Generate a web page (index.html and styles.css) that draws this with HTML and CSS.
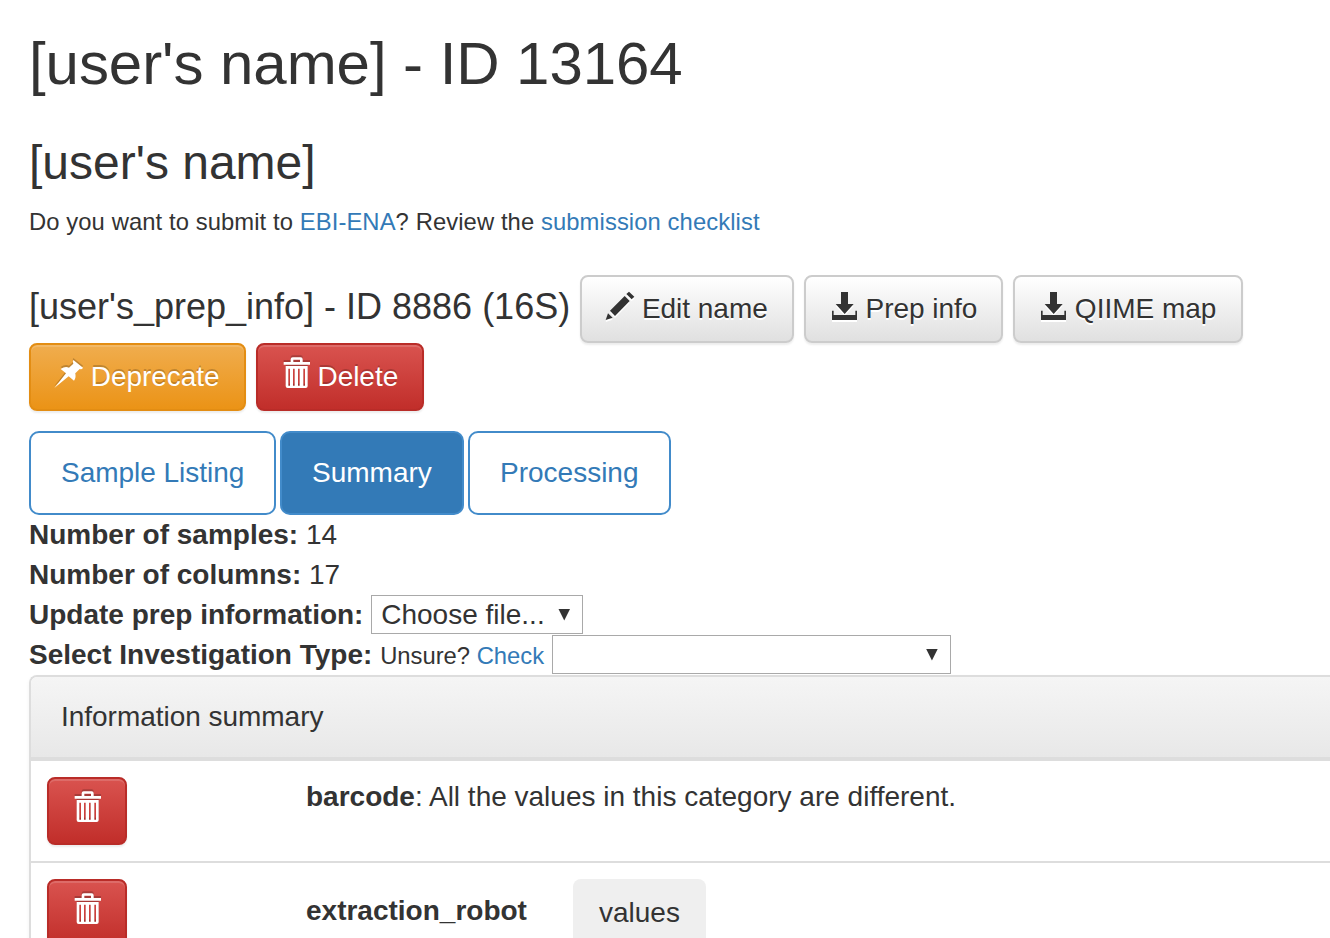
FILE: index.html
```html
<!DOCTYPE html>
<html lang="en">
<head>
<meta charset="utf-8">
<title>Prep information</title>
<link rel="stylesheet" href="styles.css">
</head>
<body>
<svg class="defs" aria-hidden="true">
  <symbol id="pencil" viewBox="108 81 84 84" overflow="visible"><path d="M107 165L114 145L128 158ZM120 137L164 93L179 108L135 153ZM169 87L177 80L193 95L185 103Z"/></symbol>
  <symbol id="download" viewBox="780 81 84 84" overflow="visible"><path d="M813 81h21v36h17L824 147L797 117h16zM786 137h5v13h65v-13h5v28h-75z"/></symbol>
  <symbol id="pin" viewBox="105 75 84 84" overflow="visible"><path d="M160 75L189 98Q186 104 179 102L166 115Q169 128 162 137L146 124L103 159L138 115L122 102Q135 93 147 98L160 86Q157 79 160 75Z"/></symbol>
  <symbol id="trash" viewBox="786 75 84 84" overflow="visible"><path fill-rule="evenodd" d="M791 81h21v-8q0-6 6-6h24q6 0 6 6v8h22v8h-79zM820 74v7h20v-7zM797 93h66v60q0 6-6 6h-54q-6 0-6-6zM805 101v51h5v-51zM819 101v51h5v-51zM834 101v51h5v-51zM850 101v51h5v-51z"/></symbol>
</svg>
<main class="page">
  <h1>[user's name] - ID 13164</h1>
  <h3>[user's name]</h3>
  <p class="hint">Do you want to submit to <a href="#">EBI-ENA</a>? Review the <a href="#">submission checklist</a></p>
  <h4>[user's_prep_info] - ID 8886 (16S)
    <button class="btn btn-default"><svg class="icon"><use href="#pencil"/></svg> Edit name</button>
    <button class="btn btn-default prep"><svg class="icon"><use href="#download"/></svg> Prep info</button>
    <button class="btn btn-default map"><svg class="icon"><use href="#download"/></svg> QIIME map</button>
    <br><button class="btn btn-warning"><svg class="icon"><use href="#pin"/></svg> Deprecate</button>
    <button class="btn btn-danger delete"><svg class="icon"><use href="#trash"/></svg> Delete</button>
  </h4>
  <nav class="pills">
    <a class="pill listing" href="#">Sample Listing</a>
    <a class="pill active" href="#">Summary</a>
    <a class="pill" href="#">Processing</a>
  </nav>
  <div class="line"><b>Number of samples:</b> 14</div>
  <div class="line"><b>Number of columns:</b> 17</div>
  <div class="line"><b>Update prep information:</b> <span class="select file">Choose file...<i class="arrow"></i></span></div>
  <div class="line"><b>Select Investigation Type:</b> <small>Unsure? <a href="#">Check</a></small> <span class="select type"><i class="arrow"></i></span></div>
  <section class="panel">
    <header class="panel-heading">Information summary</header>
    <div class="row">
      <div class="action"><button class="btn btn-danger"><svg class="icon"><use href="#trash"/></svg></button></div>
      <div class="text"><b>barcode</b>: All the values in this category are different.</div>
    </div>
    <div class="row">
      <div class="action"><button class="btn btn-danger"><svg class="icon"><use href="#trash"/></svg></button></div>
      <div class="text values-text"><b>extraction_robot</b><button class="btn btn-values">values</button></div>
    </div>
  </section>
</main>
</body>
</html>
```

FILE: styles.css
```css
* { box-sizing: border-box; }
html, body { height: 938px; overflow: hidden; }
body { margin: 0; background: #fff; color: #333; font: 28px/40px "Liberation Sans", Arial, sans-serif; }
a { color: #337ab7; text-decoration: none; }
.defs { position: absolute; width: 0; height: 0; }
.page { padding: 31px 0 0 29px; }
h1, h3, h4 { margin: 0; font-weight: 400; }
h1 { font-size: 60px; line-height: 66px; letter-spacing: -.06px; }
h3 { margin-top: 39px; font-size: 48px; line-height: 53px; }
.hint { margin: 13px 0 33px; font-size: 23.8px; letter-spacing: .09px; }
small { font-size: 23.8px; }
h4 { font-size: 36px; line-height: 40px; height: 156px; white-space: nowrap; }

.btn { height: 68px; padding: 12px 24px; border: 2px solid; border-radius: 8px; font: inherit; font-size: 28px; line-height: 40px; letter-spacing: -.03px; vertical-align: middle; white-space: nowrap; }
.btn-default { color: #333; border-color: #ccc; background: linear-gradient(#fff, #e0e0e0); text-shadow: 0 2px 0 #fff; box-shadow: inset 0 2px 0 rgba(255,255,255,.15), 0 2px 2px rgba(0,0,0,.075); }
.btn-warning, .btn-danger { color: #fff; text-shadow: 0 -2px 0 rgba(0,0,0,.2); box-shadow: inset 0 2px 0 rgba(255,255,255,.15), 0 2px 2px rgba(0,0,0,.075); }
.btn-warning { border-color: #e38d13; background: linear-gradient(#f0ad4e, #eb9316); }
.btn-danger { border-color: #b92c28; background: linear-gradient(#d9534f, #c12e2a); }
.prep { width: 199px; }
.map { width: 230px; letter-spacing: 0; }
.delete { width: 168px; }
.icon { width: 28px; height: 28px; fill: currentColor; overflow: visible; vertical-align: -2px; }
.btn-default .icon { filter: drop-shadow(0 2px 0 #fff); }
.btn-warning .icon, .btn-danger .icon { filter: drop-shadow(0 -2px 0 rgba(0,0,0,.2)); }

.pills { display: flex; gap: 4px; }
.pill { height: 84px; padding: 20px 30px; border: 2px solid #428bca; border-radius: 10px; }
.pill.active { width: 184px; color: #fff; background: #337ab7; }
.listing { width: 247px; white-space: nowrap; letter-spacing: -.03px; }

.line { height: 40px; white-space: nowrap; }
.select { display: inline-flex; justify-content: space-between; align-items: center; height: 39px; padding: 0 12px 0 9px; border: 1px solid #a9a9a9; line-height: 37px; vertical-align: top; }
.file { width: 212px; }
.type { width: 399px; }
.arrow { width: 12px; height: 12px; margin-left: auto; background: #333; clip-path: polygon(0 0, 100% 0, 50% 100%); }

.panel { border: 2px solid #ddd; border-right: 0; border-radius: 8px 0 0 8px; box-shadow: 0 2px 4px rgba(0,0,0,.05); }
.panel-heading { height: 84px; padding: 20px 30px; border-bottom: 4px solid #ddd; border-radius: 6px 0 0; background: linear-gradient(#f5f5f5, #e8e8e8); letter-spacing: -.03px; }
.row { display: flex; height: 102px; padding: 16px; border-bottom: 2px solid #ddd; }
.action { width: 259px; }
.values-text { display: flex; gap: 46px; }
.values-text b { padding-top: 12px; }
.btn-values { color: #333; border-color: transparent; background: #efefef; letter-spacing: 0; }
```
